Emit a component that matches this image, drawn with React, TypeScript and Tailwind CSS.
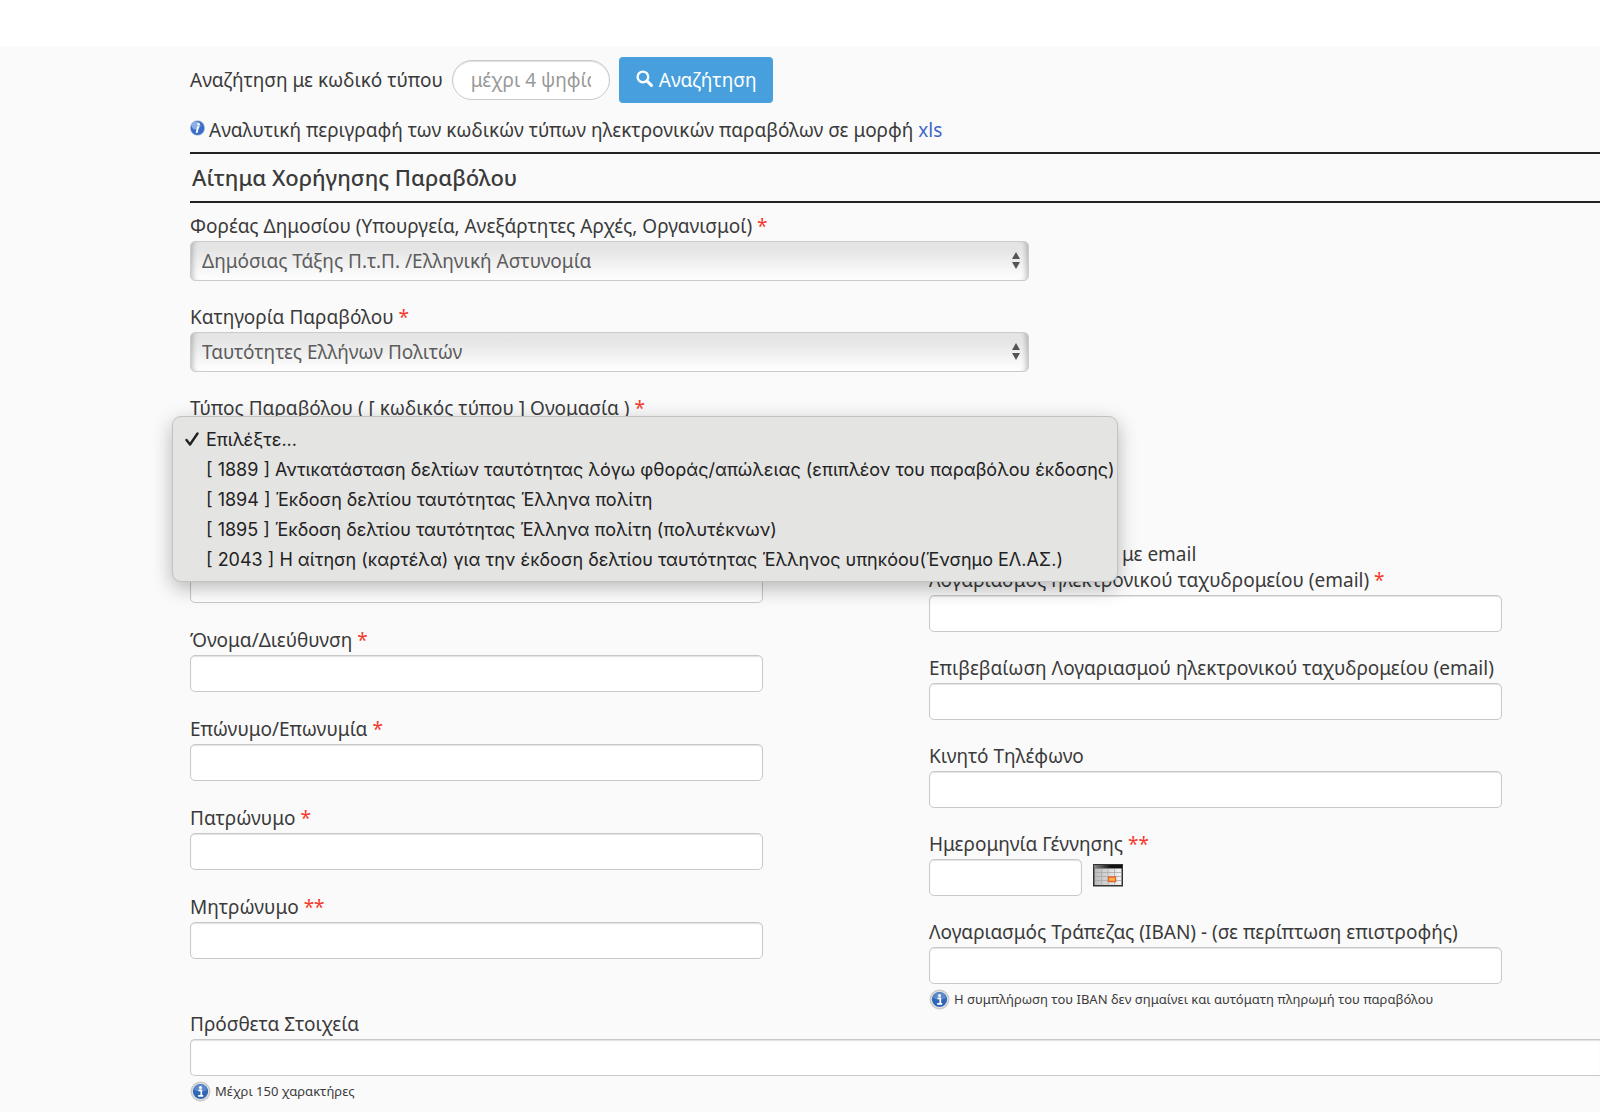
import { useState } from 'react'
import type { ReactNode } from 'react'

const FEE_TYPES = [
  'Επιλέξτε...',
  '[ 1889 ] Αντικατάσταση δελτίων ταυτότητας λόγω φθοράς/απώλειας (επιπλέον του παραβόλου έκδοσης)',
  '[ 1894 ] Έκδοση δελτίου ταυτότητας Έλληνα πολίτη',
  '[ 1895 ] Έκδοση δελτίου ταυτότητας Έλληνα πολίτη (πολυτέκνων)',
  '[ 2043 ] Η αίτηση (καρτέλα) για την έκδοση δελτίου ταυτότητας Έλληνος υπηκόου(Ένσημο ΕΛ.ΑΣ.)',
]

const INPUT =
  'block h-[37px] rounded-[5px] border border-[#c8c8c8] bg-white px-3 shadow-[inset_0_1px_1px_rgba(0,0,0,0.12)] outline-none'

function Label({ id, mark, children }: { id: string; mark?: string; children: ReactNode }) {
  return (
    <label htmlFor={id} className="mb-0.5 block w-fit whitespace-nowrap leading-[26px]">
      {children} {mark && <span className="text-[#f5392c]">{mark}</span>}
    </label>
  )
}

function TextField({ id, label, mark }: { id: string; label: string; mark?: string }) {
  return (
    <div>
      <Label id={id} mark={mark}>{label}</Label>
      <input id={id} type="text" className={`${INPUT} w-full`} />
    </div>
  )
}

function SelectBox({ id, options }: { id: string; options: string[] }) {
  return (
    <div className="relative w-full max-w-[839px]">
      <select
        id={id}
        className="block h-10 w-full appearance-none rounded-[5px] border border-[#ccc] bg-linear-to-b from-[#e5e5e5] from-20% to-white pl-[11px] pr-8 text-[#5c5c5c] shadow-[inset_6px_0_5px_-4px_rgba(0,0,0,0.22),inset_-6px_0_5px_-4px_rgba(0,0,0,0.22)] outline-none"
      >
        {options.map((o) => (
          <option key={o}>{o}</option>
        ))}
      </select>
      <svg viewBox="0 0 8 17" className="pointer-events-none absolute right-[9px] top-[11px] h-[17px] w-2 fill-[#555]">
        <path d="M4 0 8 7H0zM4 17 0 10h8z" />
      </svg>
    </div>
  )
}

function InfoBadge() {
  return (
    <svg viewBox="0 0 21 21" className="size-[21px] shrink-0">
      <circle cx="10.5" cy="10.5" r="10" fill="#c9c9c9" />
      <circle cx="10.5" cy="10.5" r="8.6" fill="#e4e4e4" />
      <circle cx="10.5" cy="10.5" r="7.6" fill="#2f66b5" />
      <path d="M4 9a6.6 6.6 0 0 1 13 0q-6.5 3-13 0z" fill="#6f9bd6" opacity=".7" />
      <circle cx="10.5" cy="6.4" r="1.5" fill="#fff" />
      <path d="M8.5 9.4h2.8v5.2M8.2 14.9h5" stroke="#fff" strokeWidth="1.7" fill="none" />
    </svg>
  )
}

function Note({ children }: { children: ReactNode }) {
  return (
    <p className="mt-1 flex items-center gap-1 whitespace-nowrap text-[13px] leading-[22px]">
      <InfoBadge />
      {children}
    </p>
  )
}

export default function App() {
  const [selected, setSelected] = useState(0)

  return (
    <div className="min-h-screen overflow-x-hidden bg-[#fafafa] font-['Noto_Sans',sans-serif] text-[19px] text-[#3a3a3a]">
      <header className="h-[46px] bg-white" />

      <main className="pl-[190px] pt-[11px]">
        {/* Αναζήτηση */}
        <form className="flex items-center gap-[9px]" onSubmit={(e) => e.preventDefault()}>
          <label htmlFor="code" className="whitespace-nowrap">Αναζήτηση με κωδικό τύπου</label>
          <input
            id="code"
            type="text"
            placeholder="μέχρι 4 ψηφία"
            className="h-10 w-[158px] rounded-full border border-[#c8c8c8] bg-white px-[18px] shadow-[inset_0_1px_1px_rgba(0,0,0,0.12)] outline-none placeholder:text-[#999]"
          />
          <button type="submit" className="flex h-[46px] items-center gap-1.5 rounded-[4px] bg-[#489fdd] px-[17px] text-white">
            <svg viewBox="0 0 16 16" className="mb-1 size-[17px] fill-none stroke-white">
              <circle cx="6.5" cy="6.5" r="5" strokeWidth="2.2" />
              <path d="m10.5 10.5 4 4" strokeWidth="2.8" strokeLinecap="round" />
            </svg>
            Αναζήτηση
          </button>
        </form>

        <p className="mb-[9px] mt-3.5 flex items-center gap-1 whitespace-nowrap leading-[26px]">
          <svg viewBox="0 0 15 16" className="mb-1 h-4 w-[15px] shrink-0">
            <ellipse cx="7.5" cy="8" rx="7.5" ry="7.8" fill="#b4c2dc" />
            <ellipse cx="7.5" cy="8" rx="6.8" ry="7.1" fill="#3a6fc9" />
            <ellipse cx="6" cy="5.5" rx="4.5" ry="4" fill="#a9c4f0" opacity=".75" />
            <circle cx="8.6" cy="4.3" r="1.2" fill="#fff" />
            <path d="M8 6.8 6.8 12.2" stroke="#fff" strokeWidth="1.8" strokeLinecap="round" />
          </svg>
          <span>
            Αναλυτική περιγραφή των κωδικών τύπων ηλεκτρονικών παραβόλων σε μορφή{' '}
            <a href="#xls" className="text-[#3a66c8]">xls</a>
          </span>
        </p>

        <h1 className="mb-2.5 border-y-2 border-[#222] pl-0.5 text-[22px] font-medium leading-[47px]">
          Αίτημα Χορήγησης Παραβόλου
        </h1>

        {/* Στοιχεία παραβόλου */}
        <div className="space-y-[23px]">
          <div>
            <Label id="agency" mark="*">Φορέας Δημοσίου (Υπουργεία, Ανεξάρτητες Αρχές, Οργανισμοί)</Label>
            <SelectBox id="agency" options={['Δημόσιας Τάξης Π.τ.Π. /Ελληνική Αστυνομία']} />
          </div>
          <div>
            <Label id="category" mark="*">Κατηγορία Παραβόλου</Label>
            <SelectBox id="category" options={['Ταυτότητες Ελλήνων Πολιτών']} />
          </div>
          <div className="relative">
            <Label id="type" mark="*">Τύπος Παραβόλου ( [ κωδικός τύπου ] Ονομασία )</Label>
            <SelectBox id="type" options={FEE_TYPES} />

            {/* Ανοιχτή λίστα τύπων */}
            <ul
              role="listbox"
              className="absolute -left-[18px] top-[21px] z-10 w-[946px] rounded-[9px] border border-[#c2c2c1] bg-[#e4e4e2] py-[7px] font-['Inter',sans-serif] text-[18px] text-[#222] shadow-[0_6px_20px_rgba(0,0,0,0.28)]"
            >
              {FEE_TYPES.map((type, i) => (
                <li key={type} role="option" aria-selected={i === selected}>
                  <button
                    type="button"
                    onClick={() => setSelected(i)}
                    className="flex h-[30px] w-full items-center whitespace-nowrap pl-3"
                  >
                    <span className="w-[21px] shrink-0">
                      {i === selected && (
                        <svg viewBox="0 0 14 14" className="size-3.5 fill-none stroke-[#222]">
                          <path d="m1.5 8 3.5 4.5L12.5 1.5" strokeWidth="2.4" strokeLinecap="round" strokeLinejoin="round" />
                        </svg>
                      )}
                    </span>
                    {type}
                  </button>
                </li>
              ))}
            </ul>
          </div>
        </div>

        {/* Στοιχεία αιτούντος */}
        <div className="mt-[75px] grid grid-cols-2 gap-[166px] pr-[98px]">
          <div className="space-y-6">
            <input type="text" aria-label="ΑΦΜ" className={`${INPUT} mt-7 w-full`} />
            <TextField id="name" label="Όνομα/Διεύθυνση" mark="*" />
            <TextField id="surname" label="Επώνυμο/Επωνυμία" mark="*" />
            <TextField id="father" label="Πατρώνυμο" mark="*" />
            <TextField id="mother" label="Μητρώνυμο" mark="**" />
          </div>

          <div className="pt-[3px]">
            <p className="pl-[193px] leading-[26px]">με email</p>
            <div className="space-y-[23px]">
              <TextField id="email" label="Λογαριασμός ηλεκτρονικού ταχυδρομείου (email)" mark="*" />
              <TextField id="email2" label="Επιβεβαίωση Λογαριασμού ηλεκτρονικού ταχυδρομείου (email)" />
              <TextField id="mobile" label="Κινητό Τηλέφωνο" />
              <div>
                <Label id="birth" mark="**">Ημερομηνία Γέννησης</Label>
                <div className="flex gap-[11px]">
                  <input id="birth" type="text" className={`${INPUT} w-[153px]`} />
                  <button type="button" aria-label="Ημερολόγιο" className="mt-1 h-6">
                    <svg viewBox="0 0 30 23" className="h-[23px] w-[30px]">
                      <defs>
                        <linearGradient id="cal-top" x1="0" x2="1">
                          <stop offset="0" stopColor="#888" />
                          <stop offset=".6" stopColor="#111" />
                        </linearGradient>
                        <linearGradient id="cal-body" x1="0" x2="1">
                          <stop offset="0" stopColor="#bbb" />
                          <stop offset="1" stopColor="#f4f4f4" />
                        </linearGradient>
                      </defs>
                      <rect width="30" height="22.5" fill="#333" />
                      <rect x="1" y="1" width="28" height="3.5" fill="url(#cal-top)" />
                      <rect x="1.5" y="4.5" width="27" height="16.5" fill="url(#cal-body)" />
                      <path d="M2 8.5h26.5M2 12.5h26.5M2 16.5h26.5M8.5 5v15.5M15 5v15.5M21.5 5v15.5" stroke="#aaa" strokeWidth=".8" />
                      <rect x="15.5" y="13" width="7" height="4.5" fill="#f9b54b" stroke="#e8602c" strokeWidth="1.4" />
                    </svg>
                  </button>
                </div>
              </div>
              <TextField id="iban" label="Λογαριασμός Τράπεζας (IBAN) - (σε περίπτωση επιστροφής)" />
            </div>
            <Note>Η συμπλήρωση του IBAN δεν σημαίνει και αυτόματη πληρωμή του παραβόλου</Note>
          </div>
        </div>

        <div className="mt-px pb-2">
          <Label id="extra">Πρόσθετα Στοιχεία</Label>
          <input id="extra" type="text" className={`${INPUT} w-full rounded-r-none border-r-0`} />
          <Note>Μέχρι 150 χαρακτήρες</Note>
        </div>
      </main>
    </div>
  )
}
